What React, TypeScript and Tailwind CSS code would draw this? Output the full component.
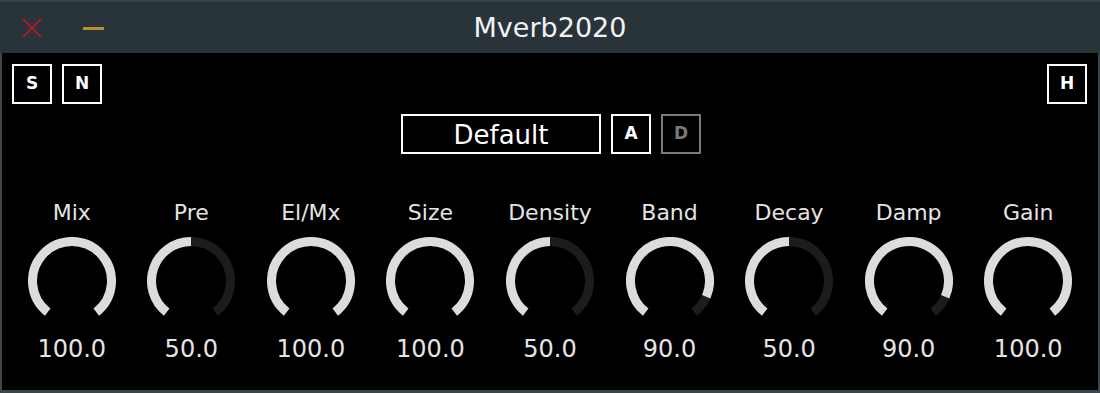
import React from 'react';

interface Param {
  name: string;
  value: number;
}

const params: Param[] = [
  { name: 'Mix', value: 100 },
  { name: 'Pre', value: 50 },
  { name: 'El/Mx', value: 100 },
  { name: 'Size', value: 100 },
  { name: 'Density', value: 50 },
  { name: 'Band', value: 90 },
  { name: 'Decay', value: 50 },
  { name: 'Damp', value: 90 },
  { name: 'Gain', value: 100 },
];

const START = -142;
const END = 142;

// point on the arc, angle in degrees clockwise from the top
const pt = (a: number, r: number) => {
  const rad = (a * Math.PI) / 180;
  return [44 + r * Math.sin(rad), 44 - r * Math.cos(rad)];
};

const arc = (from: number, to: number, r: number) => {
  const [x1, y1] = pt(from, r);
  const [x2, y2] = pt(to, r);
  const large = to - from > 180 ? 1 : 0;
  return `M ${x1} ${y1} A ${r} ${r} 0 ${large} 1 ${x2} ${y2}`;
};

const Knob: React.FC<{ value: number }> = ({ value }) => {
  const end = START + ((END - START) * value) / 100;
  return (
    <svg width="88" height="88" viewBox="0 0 88 88">
      <path d={arc(START, END, 39.5)} fill="none" stroke="#1c1c1c" strokeWidth="9" />
      <path d={arc(START, end, 39.5)} fill="none" stroke="#dcdcdc" strokeWidth="9" />
    </svg>
  );
};

const SmallButton: React.FC<{ label: string; dim?: boolean }> = ({ label, dim }) => (
  <div
    className={`w-[40px] h-[40px] flex items-center justify-center border-2 text-[17px] font-semibold ${
      dim ? 'border-[#7a7a7a] text-[#7a7a7a]' : 'border-white text-white'
    }`}
  >
    {label}
  </div>
);

const App: React.FC = () => {
  return (
    <div
      className="w-[1100px] h-[393px] bg-[#3b454c] flex flex-col px-[2px] pb-[3px] select-none"
      style={{ fontFamily: '"DejaVu Sans", Verdana, sans-serif' }}
    >
      {/* title bar */}
      <div className="h-[53px] -mx-[2px] bg-[#29333a] border-t-2 border-[#354047] flex items-center relative shrink-0">
        <div className="absolute left-[22px] top-[16px]">
          <svg width="20" height="20" viewBox="0 0 20 20">
            <path d="M1 1 L19 19 M19 1 L1 19" stroke="#a31d2a" strokeWidth="2.2" />
          </svg>
        </div>
        <div className="absolute left-[83px] top-[25px] w-[21px] h-[3px] bg-[#b8912b]" />
        <div className="w-full text-center text-[27px] text-[#f2f2f2] leading-none -mt-[1px]">Mverb2020</div>
      </div>

      {/* content */}
      <div className="flex-1 bg-black flex flex-col pt-[11px] px-[10px]">
        <div className="flex justify-between">
          <div className="flex gap-[10px]">
            <SmallButton label="S" />
            <SmallButton label="N" />
          </div>
          <div className="mr-[1px]">
            <SmallButton label="H" />
          </div>
        </div>

        <div className="flex justify-center gap-[10px] mt-[10px] ml-[2px]">
          <div className="w-[200px] h-[40px] border-2 border-white flex items-center justify-center text-white text-[26px] leading-none pt-[2px]">
            Default
          </div>
          <SmallButton label="A" />
          <SmallButton label="D" dim />
        </div>

        <div className="grid grid-cols-9 mt-[46px]">
          {params.map((p) => (
            <div key={p.name} className="flex flex-col items-center">
              <div className="h-[26px] leading-[26px] text-[22px] text-[#e4e4e4]">{p.name}</div>
              <div className="mt-[11px]">
                <Knob value={p.value} />
              </div>
              <div className="mt-[10px] h-[28px] leading-[28px] text-[24px] text-[#e4e4e4]">
                {p.value.toFixed(1)}
              </div>
            </div>
          ))}
        </div>
      </div>
    </div>
  );
};

export default App;
